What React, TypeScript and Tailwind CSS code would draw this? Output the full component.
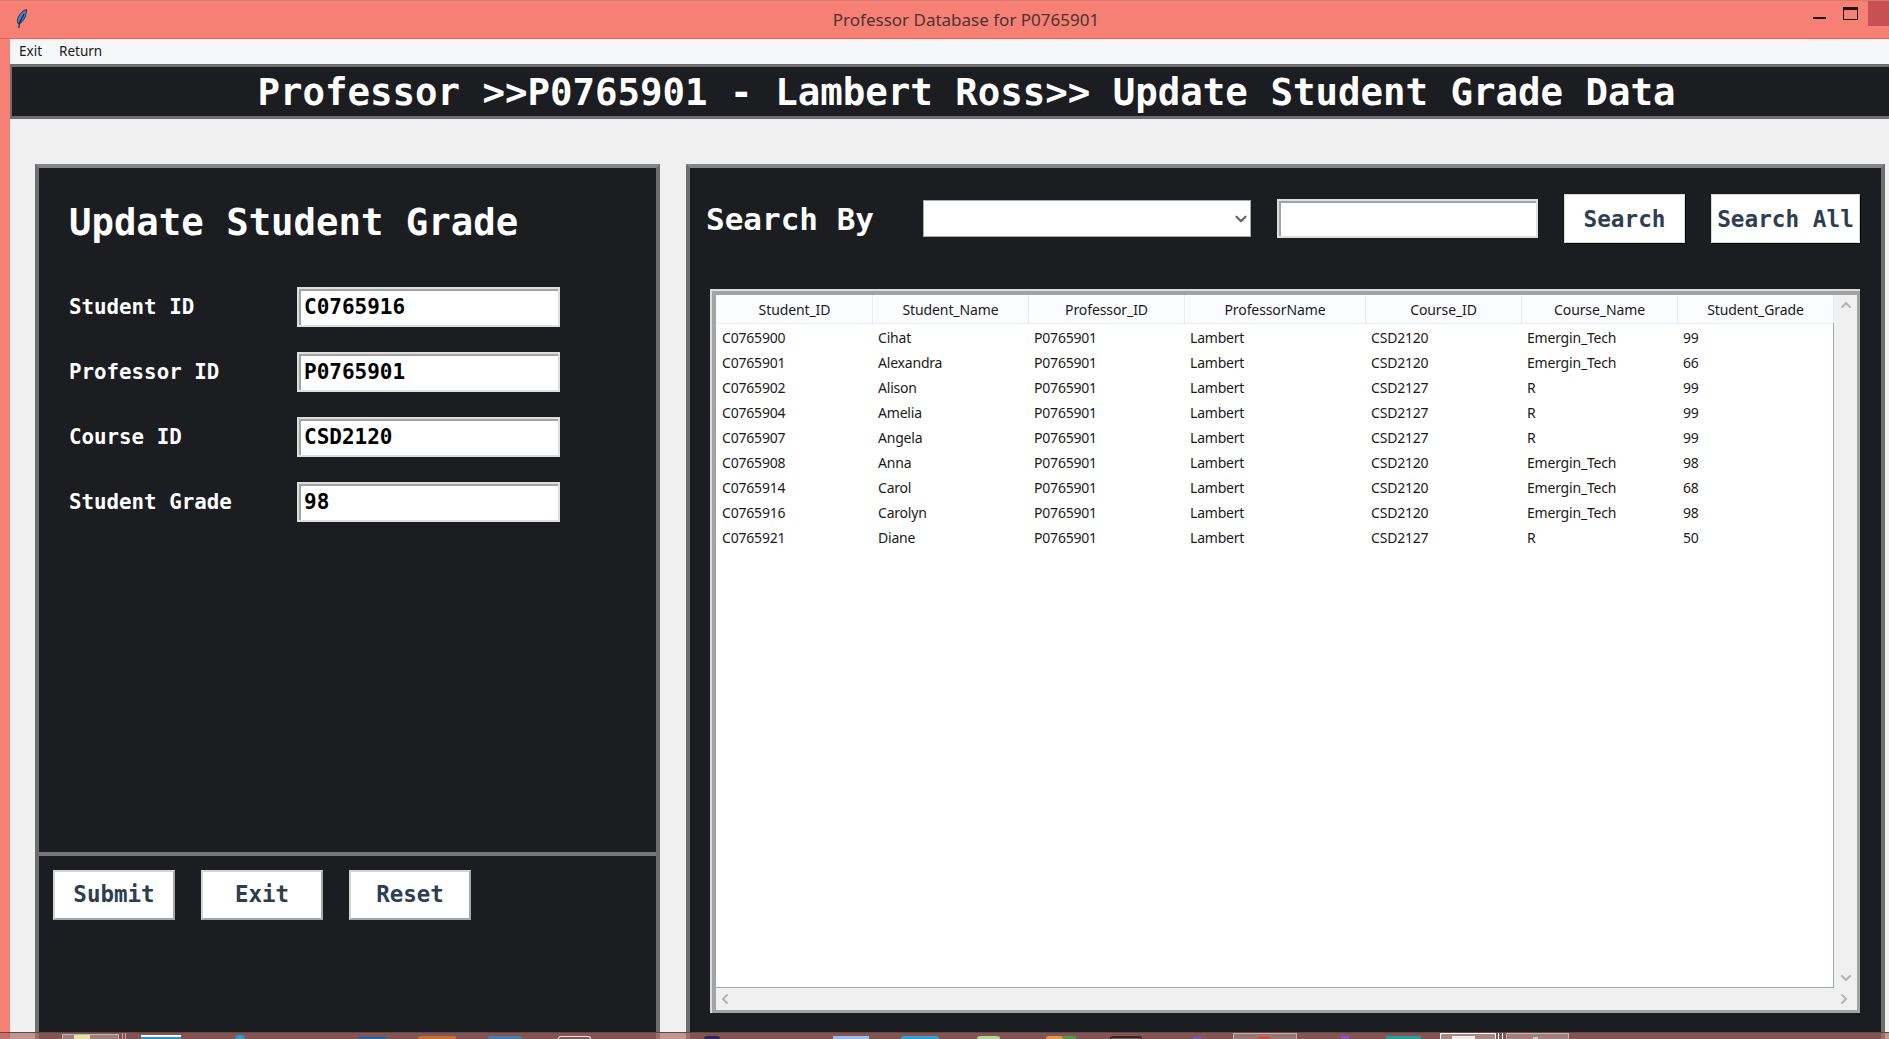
import { ChevronDown, ChevronLeft, ChevronRight, ChevronUp } from 'lucide-react'

const mono = "font-['DejaVu_Sans_Mono',monospace] font-bold"

const columns = ['Student_ID', 'Student_Name', 'Professor_ID', 'ProfessorName', 'Course_ID', 'Course_Name', 'Student_Grade']

const rows = [
  ['C0765900', 'Cihat', 'CSD2120', 'Emergin_Tech', '99'],
  ['C0765901', 'Alexandra', 'CSD2120', 'Emergin_Tech', '66'],
  ['C0765902', 'Alison', 'CSD2127', 'R', '99'],
  ['C0765904', 'Amelia', 'CSD2127', 'R', '99'],
  ['C0765907', 'Angela', 'CSD2127', 'R', '99'],
  ['C0765908', 'Anna', 'CSD2120', 'Emergin_Tech', '98'],
  ['C0765914', 'Carol', 'CSD2120', 'Emergin_Tech', '68'],
  ['C0765916', 'Carolyn', 'CSD2120', 'Emergin_Tech', '98'],
  ['C0765921', 'Diane', 'CSD2127', 'R', '50'],
]

const fields = [
  ['Student ID', 'C0765916'],
  ['Professor ID', 'P0765901'],
  ['Course ID', 'CSD2120'],
  ['Student Grade', '98'],
]

const gridCols = 'grid grid-cols-[156px_156px_156px_181px_156px_156px_156px]'

function Feather() {
  return (
    <svg width="12" height="20" viewBox="0 0 12 20">
      <path d="M10.5 0.5C6 2 2.5 6 1.5 11c-.3 1.5 0 3 1 4 3-1 5.500-4 7-8 .7-2.500 1-4.500 1-6.500z" fill="#3c83d8" stroke="#23344d" strokeWidth="1" />
      <path d="M8 5 3.500 14 2.800 19" fill="none" stroke="#1c2430" strokeWidth="1.200" />
    </svg>
  )
}

function ActionButton({ label, width }: { label: string; width: string }) {
  return (
    <button className={`${width} h-[50px] bg-white border-2 border-t-[#d4d4d4] border-l-[#d4d4d4] border-r-[#a5a5a5] border-b-[#a5a5a5] text-[22.500px] text-[#2c3e50] ${mono}`}>
      {label}
    </button>
  )
}

export default function App() {
  return (
    <div className="relative w-[1889px] h-[1039px] overflow-hidden flex flex-col bg-[#f78074] font-['Noto_Sans',sans-serif]">
      {/* title bar */}
      <div className="h-[39px] shrink-0 flex border-t border-b border-t-[#d9756a] border-b-[#d9695e]">
        <div className="w-[119px] pl-[16px] pt-[8px]">
          <Feather />
        </div>
        <div className="flex-1 text-center pt-[7px] text-[17px] leading-[24px] text-[#4a3432]">Professor Database for P0765901</div>
        <div className="w-[76px] flex items-start">
          <div className="w-[13px] h-[2px] mt-[16px] bg-[#1a1a1a]" />
          <div className="w-[15px] h-[13px] mt-[6px] ml-[17px] border border-[#1a1a1a] border-t-[3px]" />
          <div className="w-[21px] h-[25px] ml-[10px] bg-[#c75050]" />
        </div>
      </div>

      <div className="flex-1 min-h-0 ml-[10px] flex flex-col bg-[#f0f0f0]">
        {/* menu */}
        <div className="h-[25px] shrink-0 flex items-center gap-[17px] pl-[9px] bg-[#f5f6f8] text-[13.500px] text-[#1a1a1a]">
          <span>Exit</span>
          <span>Return</span>
        </div>

        <div className={`h-[55px] shrink-0 flex items-center justify-center pt-[1px] bg-[#1c1d20] border-y-[3px] border-l-[2px] border-[#6e6e6e] text-[37.400px] text-white ${mono}`}>
          <span className="pl-[32px]">Professor &gt;&gt;P0765901 - Lambert Ross&gt;&gt; Update Student Grade Data</span>
        </div>

        <div className="flex-1 min-h-0 flex pt-[45px] pl-[25px] gap-[26px]">
          {/* left panel */}
          <div className="w-[625px] h-[900px] shrink-0 bg-[#1c1d20] border-[4px] border-[#6e6e6e] border-t-[#858585]">
            <div className="h-[684px] pt-[32px] pl-[30px]">
              <div className={`text-[37.300px] leading-[44px] text-white ${mono}`}>Update Student Grade</div>
              <div className="mt-[43px] flex flex-col gap-[25px]">
                {fields.map(([label, value]) => (
                  <div key={label} className="flex items-center">
                    <div className={`w-[228px] pt-[2px] text-[20.800px] text-white ${mono}`}>{label}</div>
                    <input
                      readOnly
                      value={value}
                      className={`w-[263px] h-[40px] px-[5px] bg-white border-2 border-[#dedede] shadow-[inset_2px_2px_0_#a3a3a3] text-[21px] text-black outline-none ${mono}`}
                    />
                  </div>
                ))}
              </div>
            </div>
            <div className="border-t-[4px] border-[#777777] pt-[14px] pl-[14px] flex gap-[26px]">
              <ActionButton label="Submit" width="w-[122px]" />
              <ActionButton label="Exit" width="w-[122px]" />
              <ActionButton label="Reset" width="w-[122px]" />
            </div>
          </div>

          {/* right panel */}
          <div className="w-[1199px] h-[900px] shrink-0 bg-[#1c1d20] border-[4px] border-[#6e6e6e] border-t-[#858585] pt-[26px] pl-[16px]">
            <div className="h-[49px] flex items-center">
              <div className={`w-[217px] pt-[2px] text-[31px] text-white ${mono}`}>Search By</div>
              <div className="w-[328px] h-[37px] flex items-center justify-end bg-white border border-[#a8a8a8]">
                <ChevronDown size={18} strokeWidth={3} className="text-[#666666]" />
              </div>
              <input readOnly className="ml-[26px] w-[261px] h-[39px] bg-white border-2 border-[#dedede] shadow-[inset_2px_2px_0_#a3a3a3] outline-none" />
              <button className={`ml-[26px] w-[121px] h-[49px] pt-[1px] bg-white border border-[#d8d8d8] shadow-[1px_1px_0_#000000] text-[22.700px] text-[#2c3e50] ${mono}`}>Search</button>
              <button className={`ml-[26px] w-[149px] h-[49px] pt-[1px] bg-white border border-[#d8d8d8] shadow-[1px_1px_0_#000000] text-[22.700px] text-[#2c3e50] ${mono}`}>Search All</button>
            </div>

            <div className="mt-[46px] ml-[4px] w-[1150px] h-[724px] border-t-2 border-l-2 border-[#dcdcdc]">
              <div className="h-full flex flex-col bg-[#f0f0f0] border-t-[4px] border-l-[4px] border-r-[3px] border-b-[3px] border-[#a3a3a3]">
                <div className="h-[693px] flex">
                  <div className="w-[1118px] bg-white border-r border-b border-[#a0a7b5]">
                    <div className={`${gridCols} h-[29px] pl-[1px] bg-[#fbfcff] border-b border-[#e6edf7]`}>
                      {columns.map((c) => (
                        <div key={c} className="flex items-center justify-center border-r border-[#e6edf7] text-[14px] tracking-[-0.1px] text-[#1a1a1a]">{c}</div>
                      ))}
                    </div>
                    <div className="pt-[1px]">
                      {rows.map((r) => (
                        <div key={r[0]} className={`${gridCols} h-[25px] items-center text-[14px] tracking-[-0.2px] text-[#1a1a1a]`}>
                          <span className="pl-[6px]">{r[0]}</span>
                          <span className="pl-[6px]">{r[1]}</span>
                          <span className="pl-[6px]">P0765901</span>
                          <span className="pl-[6px]">Lambert</span>
                          <span className="pl-[6px]">{r[2]}</span>
                          <span className="pl-[6px]">{r[3]}</span>
                          <span className="pl-[6px]">{r[4]}</span>
                        </div>
                      ))}
                    </div>
                  </div>
                  <div className="flex-1 flex flex-col items-center justify-between py-[2px] text-[#b4b4b4]">
                    <ChevronUp size={16} strokeWidth={3} />
                    <ChevronDown size={16} strokeWidth={3} />
                  </div>
                </div>
                <div className="flex-1 flex items-center justify-between pl-[1px] pr-[5px] text-[#b4b4b4]">
                  <ChevronLeft size={16} strokeWidth={3} />
                  <ChevronRight size={16} strokeWidth={3} />
                </div>
              </div>
            </div>
          </div>
        </div>
      </div>

      {/* translucent taskbar lying over the window */}
      <div className="absolute left-0 right-0 bottom-0 h-[7px] flex items-end overflow-hidden bg-[#af6c67]/70 border-t border-[#6b4340]">
        <div className="ml-[62px] w-[57px] h-[5px] pl-[11px] bg-white/25 border-t border-x border-white/40"><div className="w-[16px] h-[4px] bg-[#e8e2a0]" /></div>
        <div className="ml-[3px] w-[1px] h-[6px] bg-white/50" />
        <div className="ml-[2px] w-[1px] h-[6px] bg-white/50" />
        <div className="ml-[15px] w-[40px] h-[4px] bg-[#1e9bd8] border-t-2 border-white" />
        <div className="ml-[54px] w-[10px] h-[4px] rounded-t-full bg-[#1e9bd8]" />
        <div className="ml-[113px] w-[28px] h-[2px] bg-[#0a6cc0]" />
        <div className="ml-[32px] w-[38px] h-[3px] rounded-t-[2px] bg-[#c9702a]" />
        <div className="ml-[32px] w-[34px] h-[3px] rounded-t-[2px] bg-[#3d80b8]" />
        <div className="ml-[36px] w-[33px] h-[3px] rounded-t-full border-t border-x border-[#dfe6ee]" />
        <div className="ml-[113px] w-[16px] h-[3px] rounded-t-full bg-[#2a2560]" />
        <div className="ml-[113px] w-[36px] h-[3px] bg-[#8fc0f4]" />
        <div className="ml-[32px] w-[38px] h-[3px] rounded-t-[3px] bg-[#1ea9e0]" />
        <div className="ml-[38px] w-[23px] h-[3px] rounded-t-full bg-[#a8dc8c]" />
        <div className="ml-[46px] w-[17px] h-[3px] rounded-t-full bg-[#e49a3c]" />
        <div className="w-[13px] h-[3px] bg-[#4a9a4a]" />
        <div className="ml-[34px] w-[32px] h-[3px] rounded-t-full border-t-2 border-x border-[#2a2a2a]" />
        <div className="ml-[51px] w-[8px] h-[2px] bg-[#6a5ad0]" />
        <div className="ml-[32px] w-[64px] h-[6px] pl-[24px] pt-[3px] bg-white/20 border-t border-x border-white/40"><div className="w-[12px] h-[3px] rounded-t-full bg-[#d84030]" /></div>
        <div className="ml-[44px] w-[8px] h-[3px] bg-[#8a4ce0]" />
        <div className="ml-[37px] w-[35px] h-[3px] bg-[#14a8a0]" />
        <div className="ml-[19px] w-[56px] h-[6px] pl-[11px] pt-[2px] bg-white/30 border-t border-x border-white"><div className="w-[23px] h-[4px] bg-[#efefef]" /></div>
        <div className="ml-[2px] w-[1px] h-[6px] bg-white" />
        <div className="ml-[3px] w-[1px] h-[6px] bg-white" />
        <div className="ml-[3px] w-[63px] h-[6px] pl-[26px] pt-[3px] bg-white/25 border-t border-x border-white/40"><div className="w-[5px] h-[3px] bg-[#c8c8c8]" /></div>
      </div>
    </div>
  )
}
